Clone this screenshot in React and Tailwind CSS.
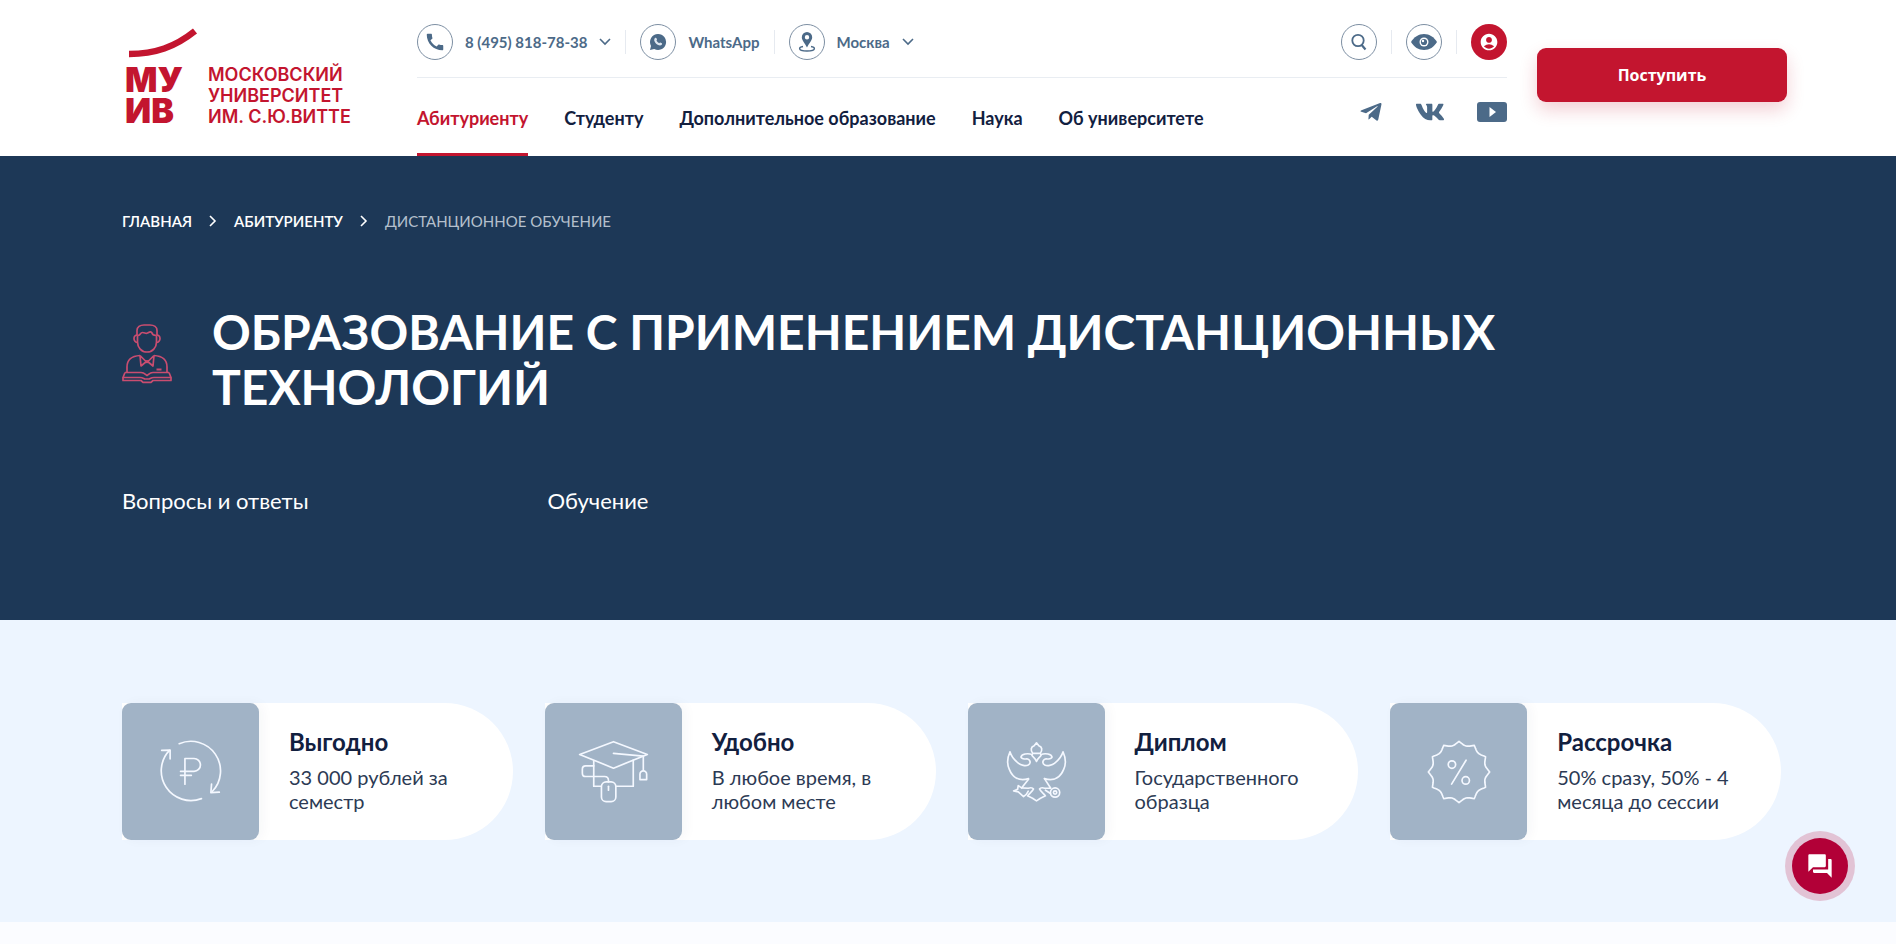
import React from 'react';
import { FaTelegramPlane, FaVk } from 'react-icons/fa';
import { MdAccountCircle, MdCall, MdForum } from 'react-icons/md';

const NAV = ['Абитуриенту', 'Студенту', 'Дополнительное образование', 'Наука', 'Об университете'];

// Reusable pieces of the top bar
const Round = ({ children }) => <span className="flex h-9 w-9 shrink-0 items-center justify-center rounded-full border border-[#7d8fa3]">{children}</span>;
const Divider = () => <span className="h-6 w-px bg-[#e6eaf0]" />;

const Chevron = ({ className }) => (
    <svg viewBox="0 0 12 8" className={className} fill="none" stroke="currentColor" strokeWidth="1.6">
        <path d="M1 1l5 5 5-5" />
    </svg>
);

const WhatsAppIcon = () => (
    <svg viewBox="0 0 18 18" className="h-[18px] w-[18px]">
        <path d="M9 1a8 8 0 1 1-3.8 15L1 17l1-4.1A8 8 0 0 1 9 1z" fill="#4c6a88" />
        <path d="M6 5c.6-.6 1.200-.4 1.500.2l.5 1.200c.1.4-.6 1-.6 1.200.6 1.200 1.500 2.100 2.800 2.700.3 0 .8-.8 1.100-.7l1.500.7c.5.3.3 1.300-.3 1.800-1 .7-2.400.5-3.900-.4-1.600-1-2.900-2.600-3.300-4C5.100 6.600 5.300 5.600 6 5z" fill="#dfe7f0" />
    </svg>
);

const PinIcon = () => (
    <svg viewBox="0 0 18 22" className="h-[22px] w-[18px]">
        <path d="M9 1a5.200 5.200 0 0 0-5.200 5.200C3.800 9.500 7 12 9 16.500c2-4.500 5.200-7 5.200-10.300A5.200 5.200 0 0 0 9 1zm0 3a2.200 2.200 0 1 1 0 4.400A2.200 2.200 0 0 1 9 4z" fill="#4c6a88" fillRule="evenodd" />
        <path d="M5 15.500c-2 .4-3.400 1-3.400 2 0 1.400 3.300 2.500 7.400 2.500s7.400-1.100 7.400-2.500c0-1-1.400-1.600-3.400-2" fill="none" stroke="#4c6a88" strokeWidth="1.400" />
    </svg>
);

const SearchIcon = () => (
    <svg viewBox="0 0 16 18" className="h-[18px] w-4" fill="none" stroke="#4c6a88">
        <circle cx="7" cy="7.500" r="5.700" strokeWidth="1.800" />
        <path d="M10.500 11.800l4 4.700" strokeWidth="2.200" />
    </svg>
);

const EyeIcon = () => (
    <svg viewBox="0 0 26 16" className="h-4 w-[26px]">
        <path d="M0 8C3 3 7.500 0 13 0s10 3 13 8c-3 5-7.500 8-13 8S3 13 0 8z" fill="#4c6a88" />
        <circle cx="13" cy="8" r="4.500" fill="#fff" />
        <circle cx="13" cy="8" r="3.100" fill="#4c6a88" />
        <circle cx="12" cy="7" r="1.200" fill="#fff" />
    </svg>
);

const YoutubeIcon = () => (
    <svg viewBox="0 0 30 20" className="h-5 w-[30px]">
        <rect width="30" height="20" rx="3" fill="#4c6a88" />
        <path d="M12.500 5l6.500 5-6.500 5z" fill="#fff" />
    </svg>
);

const Logo = () => (
    <a href="#" className="block pl-1 text-[#c3152f]">
        <svg viewBox="0 0 74 36" className="h-9 w-[74px]" fill="none" stroke="currentColor" strokeWidth="6.500">
            <path d="M4 26c26 0 46-7 66-23" />
        </svg>
        <span className="flex font-['Inter',sans-serif]">
            <span className="w-[83px] text-[34px] leading-[31px] font-black">МУ<br />ИВ</span>
            <span className="text-lg leading-[21px] font-semibold whitespace-nowrap">МОСКОВСКИЙ<br />УНИВЕРСИТЕТ<br />ИМ. С.Ю.ВИТТЕ</span>
        </span>
    </a>
);

const StudentIcon = () => (
    <svg viewBox="0 0 50 60" className="h-[60px] w-[50px] shrink-0" fill="none" stroke="#c94d70" strokeWidth="1.700" strokeLinejoin="round">
        <path d="M15 12V6.500C15 3 18 1 22 1h6c4 0 7 2 7 5.500V12" />
        <path d="M16 11.500c3-.5 2-3 4.500-3s3 1.500 5 .5 3.500-2 4.500 0 1 2 4 2.500" />
        <path d="M15.500 11c-3 0-3.500 2-3.500 3.700s1.500 3.800 3.500 3.800M34.500 11c3 0 3.500 2 3.500 3.700s-1.500 3.800-3.500 3.800" />
        <path d="M15.500 12v6c0 5.500 4 10 9.500 10s9.500-4.500 9.500-10v-6" />
        <path d="M18 31.500C10 32 5 36 5 43v5M32 31.500c8 .5 13 4.500 13 11.500v5" />
        <path d="M18 31.500l7 7 7-7M18 31.500l1 10.500 6-5 6 5 1-10.500" />
        <path d="M34.500 45.500h5" strokeWidth="2" />
        <path d="M3 48.500h16c3 0 4 1.500 6 3 2-1.500 3-3 6-3h16M3 48.500l-2 5h17c3 0 3.500 1 5 1.500h4c1.500-.5 2-1.500 5-1.500h17l-2-5" />
        <path d="M1 53.500v3h18l2 1.800h8l2-1.800h18v-3" />
    </svg>
);

const RubleIcon = () => (
    <svg viewBox="147 149 190 190" className="h-16 w-16" fill="none" stroke="#f4f8ff" strokeWidth="5" strokeLinecap="round" strokeLinejoin="round">
        <path d="M207 160A88 88 0 0 1 305 302" />
        <path d="M303 280l-2 25 25-1" />
        <path d="M273 323A88 88 0 0 1 178 180" />
        <path d="M155 180l25-1v26" />
        <path d="M224 280v-76h27a19 19 0 0 1 0 38h-40M211 254h32" />
    </svg>
);

const CapIcon = () => (
    <svg viewBox="145 148 212 188" className="h-[63px] w-[71px]" fill="none" stroke="#f4f8ff" strokeWidth="5" strokeLinecap="round" strokeLinejoin="round">
        <path d="M150 191l101-38 101 38-101 41z" />
        <path d="M251 188l89 8v42" />
        <path d="M330 266v-16a10 10 0 0 1 20 0v16z" />
        <path d="M192 210v76h22M310 208v78h-50" />
        <path d="M192 225h-24q-10 0-10 10v12q0 10 10 10h56q12 0 12 12v4" />
        <rect x="215" y="273" width="43" height="59" rx="14" />
        <path d="M236 286v12" />
    </svg>
);

const EagleIcon = () => (
    <svg viewBox="165 150 190 186" className="h-[62px] w-[63px]" fill="none" stroke="#f4f8ff" strokeWidth="5" strokeLinecap="round" strokeLinejoin="round">
        <path d="M249 187c-8-10-6-20 4-23l7-9 7 9c10 3 12 13 4 23z" />
        <path d="M246 192c4 8 9 6 14 19 5-13 10-11 14-19" />
        <path d="M247 190c-14-4-32-2-34 8 2 6 12 6 18 5 11 2 13 14 4 19-8 4-22 1-30-6-12-9-21-20-25-34-8 18-9 38-2 53 8 20 26 38 58 28" />
        <path d="M273 190c14-4 32-2 34 8-2 6-12 6-18 5-11 2-13 14-4 19 8 4 22 1 30-6 12-9 21-20 25-34 8 18 9 38 2 53-8 20-26 38-58 28" />
        <path d="M236 265l-21 26 20 1c6-2 13-2 16 2-4 9-12 13-18 21l15 7 12 8 12-8 15-7c-6-8-14-12-18-21 3-4 10-4 16-2h18l-19-29" />
        <path d="M215 291l-10-7-2 11-12 5 14 3 16 14c6-4 11-9 14-16" />
        <circle cx="316" cy="305" r="14" />
        <circle cx="316" cy="305" r="5" />
        <path d="M287 298l15 10" />
    </svg>
);

// Outline of the badge: twelve pointed waves round a circle
const badgePath = Array.from({ length: 145 }, (_, i) => {
    const a = (i / 144) * Math.PI * 2;
    const r = 91 - 11 * Math.abs(Math.sin(a * 6));
    return `${i ? 'L' : 'M'}${(95 + r * Math.cos(a)).toFixed(1)} ${(95 + r * Math.sin(a)).toFixed(1)}`;
}).join('');

const PercentIcon = () => (
    <svg viewBox="0 0 190 190" className="h-16 w-16" fill="none" stroke="#f4f8ff" strokeWidth="5" strokeLinecap="round" strokeLinejoin="round">
        <path d={badgePath + 'z'} />
        <path d="M116 60l-43 71" />
        <circle cx="74" cy="73" r="11" />
        <circle cx="115" cy="120" r="11" />
    </svg>
);

const CARDS = [
    { title: 'Выгодно', text: '33 000 рублей за семестр', Icon: RubleIcon },
    { title: 'Удобно', text: 'В любое время, в любом месте', Icon: CapIcon },
    { title: 'Диплом', text: 'Государственного образца', Icon: EagleIcon },
    { title: 'Рассрочка', text: '50% сразу, 50% - 4 месяца до сессии', Icon: PercentIcon },
];

const Header = () => (
    <header className="flex bg-white pl-[121px] pr-[109px]">
        <div className="w-[296px] shrink-0 pt-7">
            <Logo />
        </div>

        <div className="flex-1">
            <div className="flex items-center justify-between border-b border-[#e9edf2] pt-6 pb-[17px] text-[15px] font-bold text-[#4c6a88]">
                <div className="flex items-center gap-[14px]">
                    <button className="flex items-center gap-3">
                        <Round><MdCall className="h-[22px] w-[22px]" /></Round>
                        8 (495) 818-78-38
                        <Chevron className="h-2 w-3" />
                    </button>
                    <Divider />
                    <a href="#" className="flex items-center gap-3">
                        <Round><WhatsAppIcon /></Round>
                        WhatsApp
                    </a>
                    <Divider />
                    <button className="flex items-center gap-3">
                        <Round><PinIcon /></Round>
                        Москва
                        <Chevron className="h-2 w-3" />
                    </button>
                </div>
                <div className="flex items-center gap-[14px]">
                    <button aria-label="Поиск"><Round><SearchIcon /></Round></button>
                    <Divider />
                    <button aria-label="Версия для слабовидящих"><Round><EyeIcon /></Round></button>
                    <Divider />
                    <a href="#" aria-label="Личный кабинет" className="flex h-9 w-9 items-center justify-center rounded-full bg-[#c3152f] text-white">
                        <MdAccountCircle className="h-5 w-5" />
                    </a>
                </div>
            </div>

            <div className="flex justify-between">
                <nav className="flex gap-9 text-lg leading-6 font-bold text-[#12203f]">
                    {NAV.map((item, i) => (
                        <a key={item} href="#" className={i === 0 ? 'border-b-3 border-[#c3152f] pt-7 pb-[23px] text-[#c3152f]' : 'pt-7 pb-[26px]'}>{item}</a>
                    ))}
                </nav>
                <div className="mt-[22px] flex h-6 items-center gap-8 text-[#4c6a88]">
                    <a href="#" aria-label="Telegram"><FaTelegramPlane className="h-6 w-6" /></a>
                    <a href="#" aria-label="ВКонтакте"><FaVk className="h-5 w-[30px]" preserveAspectRatio="xMidYMid slice" /></a>
                    <a href="#" aria-label="YouTube"><YoutubeIcon /></a>
                </div>
            </div>
        </div>

        <div className="ml-[30px] pt-12">
            <button className="h-[54px] w-[250px] rounded-[9px] bg-[#c3152f] font-['Open_Sans',sans-serif] text-base font-bold text-white shadow-[0_8px_18px_rgba(195,21,47,0.2)]">Поступить</button>
        </div>
    </header>
);

const Hero = () => (
    <section className="bg-[#1d3857] pt-[53px] pr-[120px] pb-[103px] pl-[122px] text-white">
        <nav className="flex items-center text-[15px] leading-6">
            <a href="#" className="font-semibold">ГЛАВНАЯ</a>
            <Chevron className="mx-[15px] h-2 w-3 -rotate-90" />
            <a href="#" className="font-semibold">АБИТУРИЕНТУ</a>
            <Chevron className="mx-[15px] h-2 w-3 -rotate-90" />
            <span className="text-[#b5c0cd]">ДИСТАНЦИОННОЕ ОБУЧЕНИЕ</span>
        </nav>

        <div className="mt-[71px] flex items-start gap-10">
            <div className="pt-5"><StudentIcon /></div>
            <h1 className="max-w-[1360px] text-5xl leading-[55px] font-bold">ОБРАЗОВАНИЕ С ПРИМЕНЕНИЕМ ДИСТАНЦИОННЫХ ТЕХНОЛОГИЙ</h1>
        </div>

        <div className="mt-[71px] grid grid-cols-4 gap-x-12 text-[22px] leading-8">
            <a href="#">Вопросы и ответы</a>
            <a href="#">Обучение</a>
        </div>
    </section>
);

const App = () => (
    <div className="min-h-screen bg-[#fbfcff] font-['Lato',sans-serif]">
        <Header />
        <Hero />
        <section className="grid grid-cols-4 gap-8 bg-[#edf5ff] pt-[83px] pr-[115px] pb-[82px] pl-[122px]">
            {CARDS.map(({ title, text, Icon }) => (
                <div key={title} className="flex rounded-l-xl rounded-r-full bg-white">
                    <div className="flex h-[137px] w-[137px] shrink-0 items-center justify-center rounded-[9px] bg-[#a1b3c6] shadow-[4px_0_12px_rgba(29,56,87,0.04)]">
                        <Icon />
                    </div>
                    <div className="flex flex-col justify-center gap-2 pr-12 pb-1 pl-[30px] text-[#12203f]">
                        <h2 className="text-2xl leading-[30px] font-bold">{title}</h2>
                        <p className="text-xl leading-6 text-[#2c3a54]">{text}</p>
                    </div>
                </div>
            ))}
        </section>

        <button aria-label="Открыть чат" className="fixed right-[41px] bottom-[43px] flex h-[70px] w-[70px] items-center justify-center rounded-full bg-[#e2c3d5]">
            <span className="flex h-14 w-14 items-center justify-center rounded-full bg-[#b20037] text-white">
                <MdForum className="h-7 w-7" />
            </span>
        </button>
    </div>
);

export default App;
